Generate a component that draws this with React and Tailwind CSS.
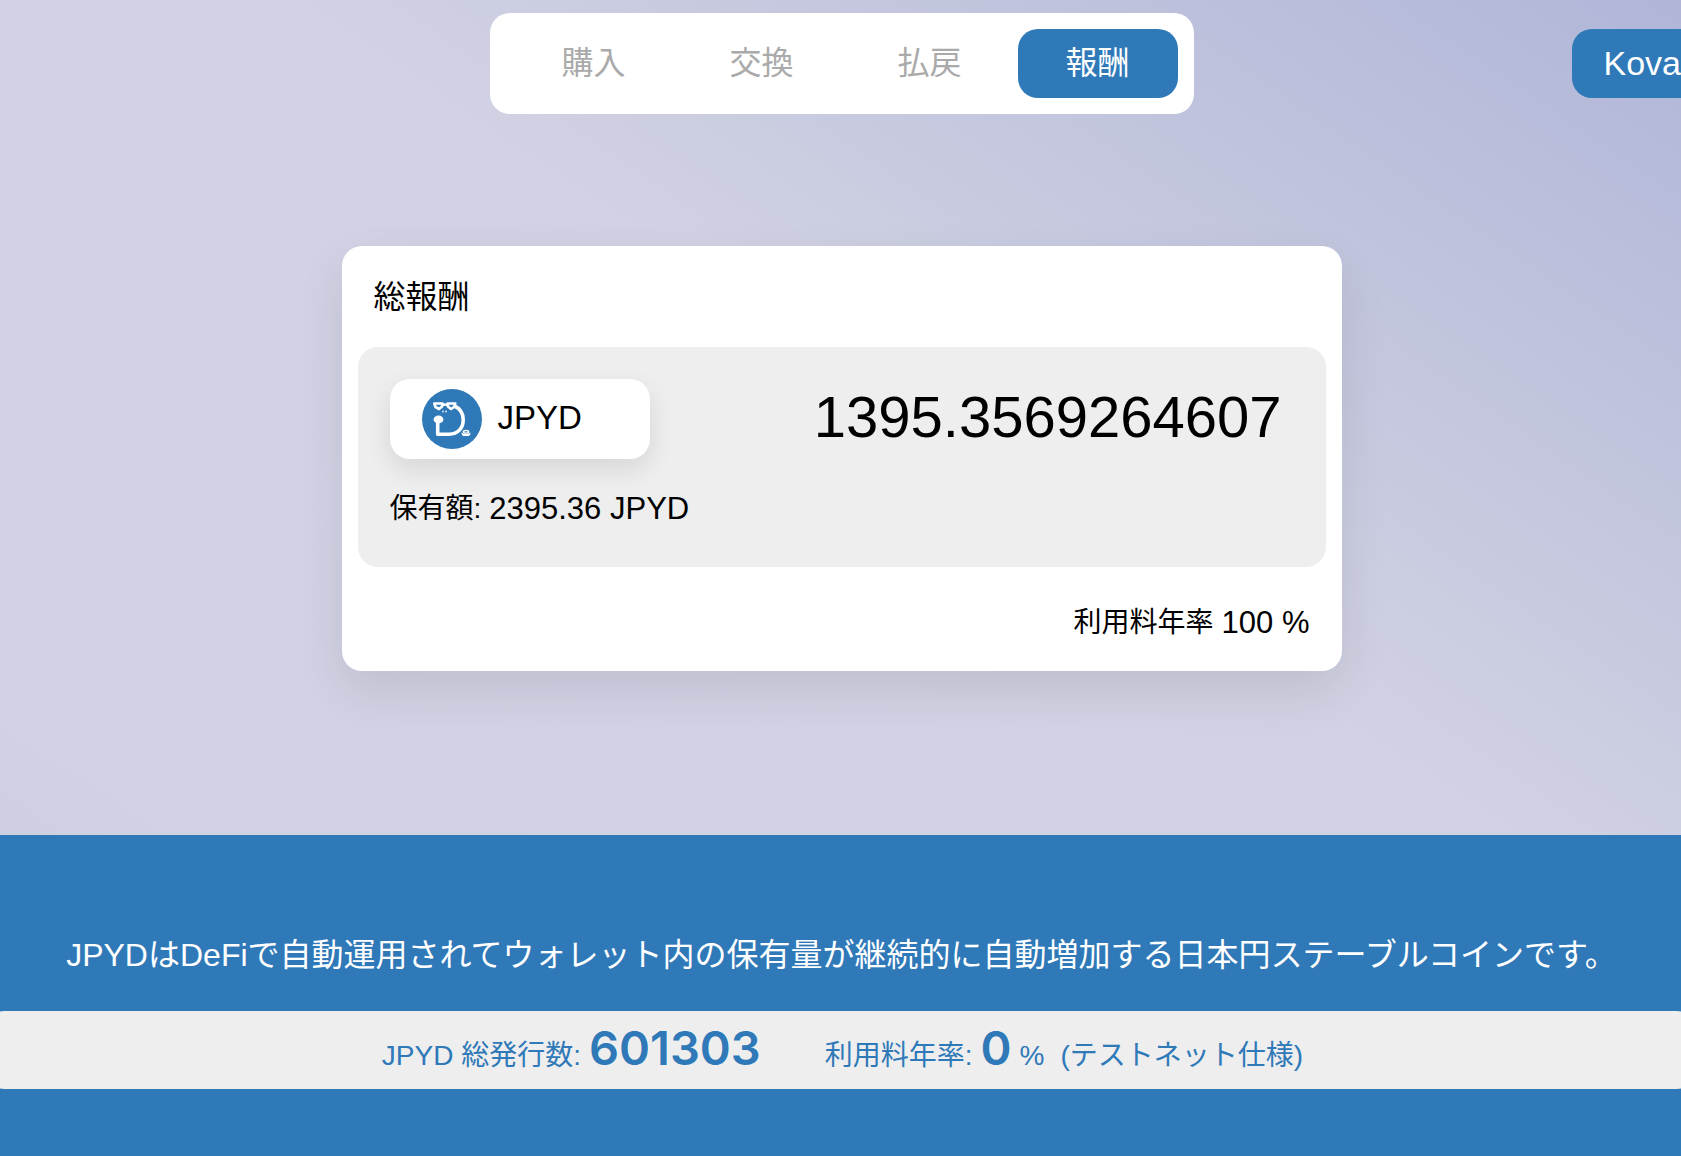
import React, { useState } from "react";

const tabs = ["購入", "交換", "払戻", "報酬"];

function Logo() {
  return (
    <svg viewBox="0 0 60 60" className="size-15 shrink-0" aria-hidden="true">
      <circle cx="30" cy="30" r="30" fill="#2f79b8" />
      <g fill="none" stroke="#fff" strokeLinejoin="round">
        <path
          d="M15.700 30V45.200H27C36.500 45.200 41.200 38.500 41.200 31C41.200 24.500 38 19.500 32.500 17"
          strokeWidth="3.600"
        />
        <path d="M12.300 14.500H20.500L20 17.500L17 20L13.500 18Z" strokeWidth="2.600" />
        <path d="M25.500 14.500H33.300L32 18L29 20L26 17.500Z" strokeWidth="2.600" />
        <path d="M19.500 17Q23 14 26.500 17" strokeWidth="2.200" />
        <ellipse cx="44" cy="42.800" rx="2.600" ry="1.300" strokeWidth="1.400" />
      </g>
      <path
        d="M39.500 43.500Q39.500 47 42 47H46Q48.500 47 48.500 43.500Q46 45 44 45Q42 45 39.500 43.500Z"
        fill="#fff"
      />
      <ellipse cx="16.500" cy="30.500" rx="4.900" ry="3.900" fill="#fff" />
      <circle cx="21" cy="22.500" r="1" fill="#d5e4f1" />
      <circle cx="24" cy="22.500" r="1" fill="#d5e4f1" />
    </svg>
  );
}

function Header() {
  const [active, setActive] = useState("報酬");
  return (
    <header className="grid grid-cols-[1fr_auto_1fr] items-center pt-[13px]">
      <nav className="col-start-2 flex gap-2 rounded-[20px] bg-white py-4 pr-4 pl-6">
        {tabs.map((tab) => (
          <button
            key={tab}
            type="button"
            onClick={() => setActive(tab)}
            className={`h-[69px] w-40 cursor-pointer rounded-[20px] pb-0.5 text-[32px] ${
              active === tab ? "bg-[#2f79b8] text-white" : "text-[#aaa]"
            }`}
          >
            {tab}
          </button>
        ))}
      </nav>
      <button
        type="button"
        className="h-[69px] cursor-pointer justify-self-end rounded-l-[20px] bg-[#2f79b8] pl-8 text-[34px] text-white"
      >
        Kova
      </button>
    </header>
  );
}

function RewardCard() {
  return (
    <section className="mx-auto mt-[132px] w-full max-w-[1000px] rounded-[20px] bg-white px-4 pb-6 shadow-[0_20px_48px_rgba(0,0,0,0.09)]">
      <h1 className="flex h-[101px] items-center px-4 text-[32px]">総報酬</h1>
      <div className="rounded-[20px] bg-[#eee] p-8">
        <div className="flex items-start justify-between">
          <div className="flex h-20 w-[260px] items-center gap-4 rounded-[20px] bg-white px-8 shadow-[0_10px_26px_rgba(0,0,0,0.1)]">
            <Logo />
            <span className="pb-0.5 text-[33px]">JPYD</span>
          </div>
          <span className="pr-3 text-[58px] leading-[76px]">1395.3569264607</span>
        </div>
        <p className="mt-6 flex h-[52px] items-center gap-2 text-[28px]">
          <span>保有額:</span>
          <span className="text-[31px]">2395.36 JPYD</span>
        </p>
      </div>
      <p className="mt-8 flex h-12 items-center justify-end gap-2 px-4 text-[28px]">
        <span>利用料年率</span>
        <span className="text-[31px]">100 %</span>
      </p>
    </section>
  );
}

function Footer() {
  return (
    <footer className="mt-[164px] grow bg-[#2f79b8] pt-[94px] text-white">
      <p className="pl-0.5 text-center text-[32px] leading-[52px] whitespace-nowrap">
        JPYDはDeFiで自動運用されてウォレット内の保有量が継続的に自動増加する日本円ステーブルコインです。
      </p>
      <div className="-mx-4 mt-[30px] flex h-[78px] items-center justify-center gap-16 rounded-[20px] bg-[#eee] pl-1 text-[28px] text-[#2f79b8]">
        <p className="flex items-baseline gap-2">
          <span>JPYD 総発行数:</span>
          <b className="font-['Inter'] text-[47px] leading-none font-semibold">601303</b>
        </p>
        <p className="flex items-baseline gap-2">
          <span>利用料年率:</span>
          <b className="font-['Inter'] text-[47px] leading-none font-semibold">0</b>
          <span>%</span>
          <span className="pl-2">(テストネット仕様)</span>
        </p>
      </div>
    </footer>
  );
}

export default function App() {
  return (
    <div
      lang="ja"
      className="flex min-h-screen flex-col overflow-hidden bg-[linear-gradient(to_top_right,#c6c7dd_0%,#d0d1e2_18%,#d1d2e4_38%,#d0d1e2_60%,#b0b6d8_100%)] font-['Liberation_Sans','Noto_Sans_CJK_JP',sans-serif] text-black"
    >
      <main className="pl-0.5">
        <Header />
        <RewardCard />
      </main>
      <Footer />
    </div>
  );
}
